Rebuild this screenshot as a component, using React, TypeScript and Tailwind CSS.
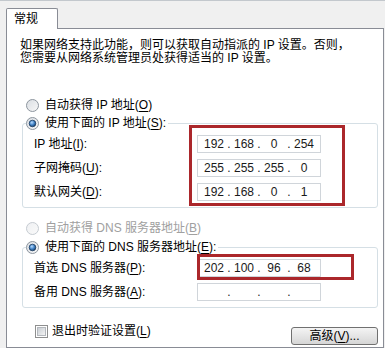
import { Fragment, useId } from "react";

function Radio({ checked, disabled }: { checked?: boolean; disabled?: boolean }) {
  const id = useId().replace(/:/g, "");
  return (
    <svg width="13" height="13" viewBox="0 0 13 13" className="shrink-0">
      <defs>
        <linearGradient id={`r${id}`} x1="0" y1="0" x2="1" y2="1">
          <stop offset="0" stopColor={disabled ? "#eef0f2" : "#d9dde2"} />
          <stop offset="1" stopColor={disabled ? "#fafafa" : "#f8f8f8"} />
        </linearGradient>
        <radialGradient id={`d${id}`} cx="0.4" cy="0.35" r="0.7">
          <stop offset="0" stopColor="#b8dcff" />
          <stop offset="0.55" stopColor="#3d7fc4" />
          <stop offset="1" stopColor="#16375c" />
        </radialGradient>
      </defs>
      <circle
        cx="6.5"
        cy="6.5"
        r="6"
        fill={`url(#r${id})`}
        stroke={disabled ? "#c5cbd1" : "#8d959e"}
      />
      {checked && (
        <circle
          cx="6.5"
          cy="6.5"
          r="3.3"
          fill={`url(#d${id})`}
          stroke="#1b3a5e"
          strokeWidth="0.8"
        />
      )}
    </svg>
  );
}

function Key({ k }: { k: string }) {
  return (
    <>
      (<span className="underline underline-offset-2">{k}</span>)
    </>
  );
}

function IpField({ parts }: { parts: string[] }) {
  return (
    <div
      className="
      flex
      h-[18px]
      w-[124px]
      items-center
      border
      border-[#d0d5da]
      bg-white
      pl-[3px]
      font-['Liberation_Sans',sans-serif]
      text-[12px]
      text-[#1a1a1a]
      "
    >
      {parts.map((p, i) => (
        <Fragment key={i}>
          {i > 0 && <span className="w-[4px] text-center">.</span>}
          <span className="w-[26px] text-center">{p}</span>
        </Fragment>
      ))}
    </div>
  );
}

function FieldRow({ label, parts }: { label: React.ReactNode; parts: string[] }) {
  return (
    <div className="flex h-[18px] items-center">
      <div className="w-[174px] pl-[11px]">{label}</div>
      <IpField parts={parts} />
    </div>
  );
}

export default function App() {
  return (
    <div
      className="
      flex
      h-[348px]
      w-[385px]
      flex-col
      overflow-hidden
      border-t
      border-[#c3c8cd]
      bg-[#f0f0f0]
      font-['Liberation_Sans','Noto_Sans_CJK_SC',sans-serif]
      text-[12px]
      text-black
      "
    >
      <div
        className="
        relative
        z-10
        -mb-px
        ml-[6px]
        mt-[7px]
        h-[21px]
        w-[52px]
        rounded-t-[2px]
        border
        border-b-0
        border-[#898c95]
        bg-white
        pl-[7px]
        leading-[20px]
        "
      >
        常规
      </div>

      <div
        className="
        ml-[6px]
        mr-[1px]
        h-[400px]
        border
        border-[#898c95]
        bg-white
        "
      >
        <p className="ml-[13px] mt-[10px] leading-[13px]">
          如果网络支持此功能，则可以获取自动指派的 IP 设置。否则，
          <br />
          您需要从网络系统管理员处获得适当的 IP 设置。
        </p>

        <div className="ml-[19px] mt-[31px] flex h-[18px] items-center gap-[6px] leading-[18px]">
          <Radio />
          <span>
            自动获得 IP 地址<Key k="O" />
          </span>
        </div>

        <div className="relative ml-[15px] mr-[5px] mt-[9px] rounded-[3px] border border-[#d5dfe5] pb-[6px]">
          <div className="-mt-[10px] ml-[3px] flex h-[18px] w-fit items-center gap-[6px] bg-white pr-[2px] leading-[18px]">
            <Radio checked />
            <span>
              使用下面的 IP 地址<Key k="S" />:
            </span>
          </div>
          <div className="mt-[3px] flex flex-col gap-[6px]">
            <FieldRow
              label={<>IP 地址<Key k="I" />:</>}
              parts={["192", "168", "0", "254"]}
            />
            <FieldRow
              label={<>子网掩码<Key k="U" />:</>}
              parts={["255", "255", "255", "0"]}
            />
            <FieldRow
              label={<>默认网关<Key k="D" />:</>}
              parts={["192", "168", "0", "1"]}
            />
          </div>
          <div className="absolute left-[166px] top-[1px] h-[81px] w-[156px] border-[3px] border-[#ab272b]" />
        </div>

        <div className="ml-[19px] mt-[11px] flex h-[18px] items-center gap-[6px] leading-[18px] text-[#a0a0a0]">
          <Radio disabled />
          <span>
            自动获得 DNS 服务器地址<Key k="B" />
          </span>
        </div>

        <div className="relative ml-[15px] mr-[5px] mt-[10px] rounded-[3px] border border-[#d5dfe5] pb-[6px]">
          <div className="-mt-[10px] ml-[3px] flex h-[18px] w-fit items-center gap-[6px] bg-white pr-[2px] leading-[18px]">
            <Radio checked />
            <span>
              使用下面的 DNS 服务器地址<Key k="E" />:
            </span>
          </div>
          <div className="mt-[3px] flex flex-col gap-[6px]">
            <FieldRow
              label={<>首选 DNS 服务器<Key k="P" />:</>}
              parts={["202", "100", "96", "68"]}
            />
            <FieldRow
              label={<>备用 DNS 服务器<Key k="A" />:</>}
              parts={["", "", "", ""]}
            />
          </div>
          <div className="absolute left-[174px] top-[6px] h-[26px] w-[157px] border-[3px] border-[#ab272b]" />
        </div>

        <div className="ml-[28px] mr-[5px] mt-[14px] flex items-start justify-between">
          <div className="flex h-[18px] items-center gap-[4px] leading-[18px]">
            <div className="flex h-[13px] w-[13px] items-center justify-center border border-[#8e8f8f] bg-white">
              <div className="h-[9px] w-[9px] border border-[#b4b8bd] bg-gradient-to-br from-[#c9ced4] to-[#f4f4f4]" />
            </div>
            <span>
              退出时验证设置<Key k="L" />
            </span>
          </div>
          <button
            className="
            mt-[5px]
            h-[18px]
            w-[87px]
            rounded-[3px]
            border
            border-[#707070]
            bg-gradient-to-b
            from-[#f4f4f4]
            to-[#d6d6d6]
            leading-[16px]
            "
          >
            高级<Key k="V" />...
          </button>
        </div>
      </div>
    </div>
  );
}
